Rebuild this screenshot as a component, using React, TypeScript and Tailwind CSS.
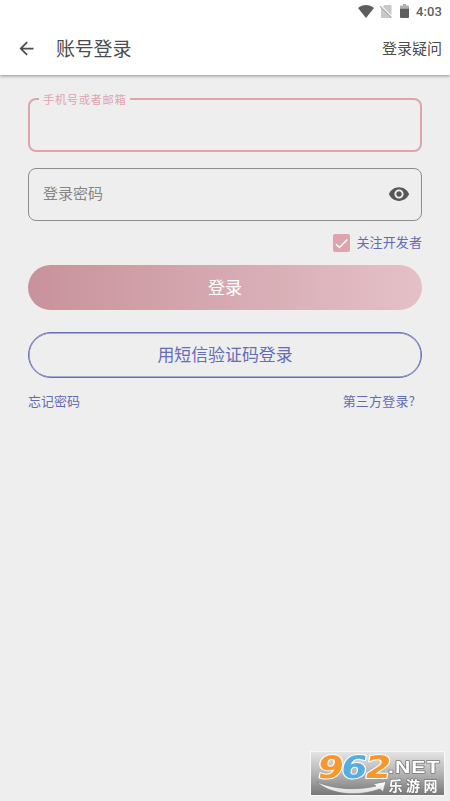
import { useState } from "react";
import { MdArrowBack, MdCheck, MdVisibility, MdVisibilityOff } from "react-icons/md";

function StatusBar() {
  return (
    <div className="flex h-[22px] items-center justify-end pr-2 text-[#5e5e5e]">
      <svg className="mr-[6px] h-[13px] w-4" viewBox="0 0 16 13" fill="currentColor">
        <path d="M8 13 0 3.1C2.2 1.1 5 0 8 0s5.800 1.100 8 3.100L8 13Z" />
      </svg>
      <svg className="mr-[8px] h-[13px] w-3" viewBox="0 0 12 13">
        <path d="M4.500 0H10.500Q11.500 0 11.500 1V12Q11.500 13 10.500 13H2Q1 13 1 12V3.500L4.500 0Z" fill="#c8c8c8" />
        <path d="m0 0 12 12" stroke="#fff" strokeWidth="1.600" />
        <path d="m0 1.200 11.500 11.500" stroke="#aaa" strokeWidth="1.200" />
      </svg>
      <svg className="mr-[7px] h-[14px] w-[9px]" viewBox="0 0 9 14" fill="currentColor">
        <path d="M3 0H6V1.500H8Q9 1.500 9 2.500V4.500H0V2.500Q0 1.500 1 1.500H3V0Z" fill="#b0b0b0" />
        <path d="M0 4.500H9V13Q9 14 8 14H1Q0 14 0 13V4.500Z" />
      </svg>
      <span className="font-['Roboto',sans-serif] text-[13px] font-medium leading-none tracking-[0.1px]">4:03</span>
    </div>
  );
}

function SiteLogo() {
  return (
    <svg className="fixed left-[310px] top-[751px] h-[45px] w-[135px] overflow-visible" viewBox="0 0 135 45">
      <defs>
        <linearGradient id="plate" x1="0" y1="0" x2="0" y2="1">
          <stop offset="0" stopColor="#e5e5e5" />
          <stop offset="0.500" stopColor="#b4b4b4" />
          <stop offset="1" stopColor="#777" />
        </linearGradient>
        <linearGradient id="swoosh" x1="0" y1="0" x2="0" y2="1">
          <stop offset="0" stopColor="#fff" />
          <stop offset="1" stopColor="#ddd" />
        </linearGradient>
      </defs>
      <rect x="0.500" y="0.500" width="134" height="44" fill="url(#plate)" stroke="#f8f8f8" />
      <g
        fontFamily="'DejaVu Sans', sans-serif"
        fontWeight="700"
        fontSize="31"
        stroke="#fff"
        strokeWidth="2"
        strokeLinejoin="round"
        paintOrder="stroke"
        transform="translate(6 27) skewX(-10)"
      >
        <text x="0" y="0" textLength="26" lengthAdjust="spacingAndGlyphs" fill="#f7982f">9</text>
        <text x="23.500" y="0" textLength="26" lengthAdjust="spacingAndGlyphs" fill="#58ade0">6</text>
        <text x="47.500" y="0" textLength="26" lengthAdjust="spacingAndGlyphs" fill="#f7982f">2</text>
      </g>
      <path
        d="M7 31C23 38 46 40 66 35L63 33 76 30.500 73 41 70 38C48 46 21 44 7 31Z"
        fill="url(#swoosh)"
        stroke="#777"
        strokeWidth="0.600"
      />
      <g fill="#fff" stroke="#777" strokeWidth="1.400" strokeLinejoin="round" paintOrder="stroke">
        <text
          transform="translate(78 21.500) scale(1.250 1)"
          fontFamily="'Liberation Sans', sans-serif"
          fontSize="17"
          fontWeight="700"
          letterSpacing="0.800"
        >
          .NET
        </text>
        <text x="78.500" y="39.500" fontFamily="'Noto Sans CJK SC', sans-serif" fontSize="14" fontWeight="700" letterSpacing="3.500">
          乐游网
        </text>
      </g>
    </svg>
  );
}

export default function App() {
  const [account, setAccount] = useState("");
  const [password, setPassword] = useState("");
  const [showPassword, setShowPassword] = useState(false);
  const [follow, setFollow] = useState(true);

  return (
    <div className="h-screen overflow-hidden bg-[#eeeeee] font-['Noto_Sans_CJK_SC',sans-serif]">
      <header className="relative h-[75px] bg-white shadow-[0_1px_3px_rgba(0,0,0,0.4)]">
        <StatusBar />
        <div className="flex h-[53px] items-center pl-4 pr-2 text-[#4c4c4c]">
          <button aria-label="返回">
            <MdArrowBack className="size-[21px]" />
          </button>
          <h1 className="ml-[19px] pb-[2px] text-[19px] leading-none tracking-[-0.2px]">账号登录</h1>
          <button className="ml-auto pb-[2px] text-[15px] leading-none">登录疑问</button>
        </div>
      </header>

      <main className="flex flex-col px-7 pt-4">
        <fieldset className="h-[61px] rounded-[8px] border-2 border-[#dea4ad] pl-[9px]">
          <legend className="px-[4px] text-[11.3px] leading-4 tracking-[0.6px] text-[#dea4ad]">手机号或者邮箱</legend>
          <input
            aria-label="手机号或者邮箱"
            className="h-8 w-full bg-transparent text-[15px] text-[#555] outline-none"
            value={account}
            onChange={(e) => setAccount(e.target.value)}
          />
        </fieldset>

        <div className="mt-4 flex h-[53px] items-center rounded-[8px] border border-[#8c8c8c] pb-px pl-[14px] pr-[11px]">
          <input
            type={showPassword ? "text" : "password"}
            placeholder="登录密码"
            className="h-8 min-w-0 flex-1 bg-transparent pb-[3px] text-[15px] text-[#555] outline-none placeholder:text-[#858585]"
            value={password}
            onChange={(e) => setPassword(e.target.value)}
          />
          <button aria-label="显示密码" className="text-[#575757]" onClick={() => setShowPassword(!showPassword)}>
            {showPassword ? <MdVisibilityOff className="size-[22px]" /> : <MdVisibility className="size-[22px]" />}
          </button>
        </div>

        <div className="mt-[13px] flex h-[18px] items-center justify-end">
          <button
            role="checkbox"
            aria-checked={follow}
            aria-label="关注开发者"
            className="flex h-[18px] w-[17px] items-center justify-center rounded-[2px] bg-[#dea4ad] text-white"
            onClick={() => setFollow(!follow)}
          >
            {follow && <MdCheck className="size-[17px]" />}
          </button>
          <span className="ml-[6px] pb-[3px] text-[13px] leading-none tracking-[0.1px] text-[#636ab3]">关注开发者</span>
        </div>

        <button className="mt-[13px] h-[45px] rounded-full bg-linear-to-r from-[#c8929c] to-[#e4c1c7] pb-[2px] text-[17px] leading-none text-white">
          登录
        </button>
        <button className="mt-[22px] h-[46px] rounded-full border border-[#666db5] pb-[2px] text-[16.9px] leading-none text-[#666db5] shadow-[inset_0_0_0_0.5px_#666db5]">
          用短信验证码登录
        </button>

        <div className="mt-[14px] flex justify-between pr-[7px] text-[13px] leading-[17px] text-[#636ab3]">
          <button>忘记密码</button>
          <button className="tracking-[0.2px]">第三方登录?</button>
        </div>
      </main>

      <SiteLogo />
    </div>
  );
}
